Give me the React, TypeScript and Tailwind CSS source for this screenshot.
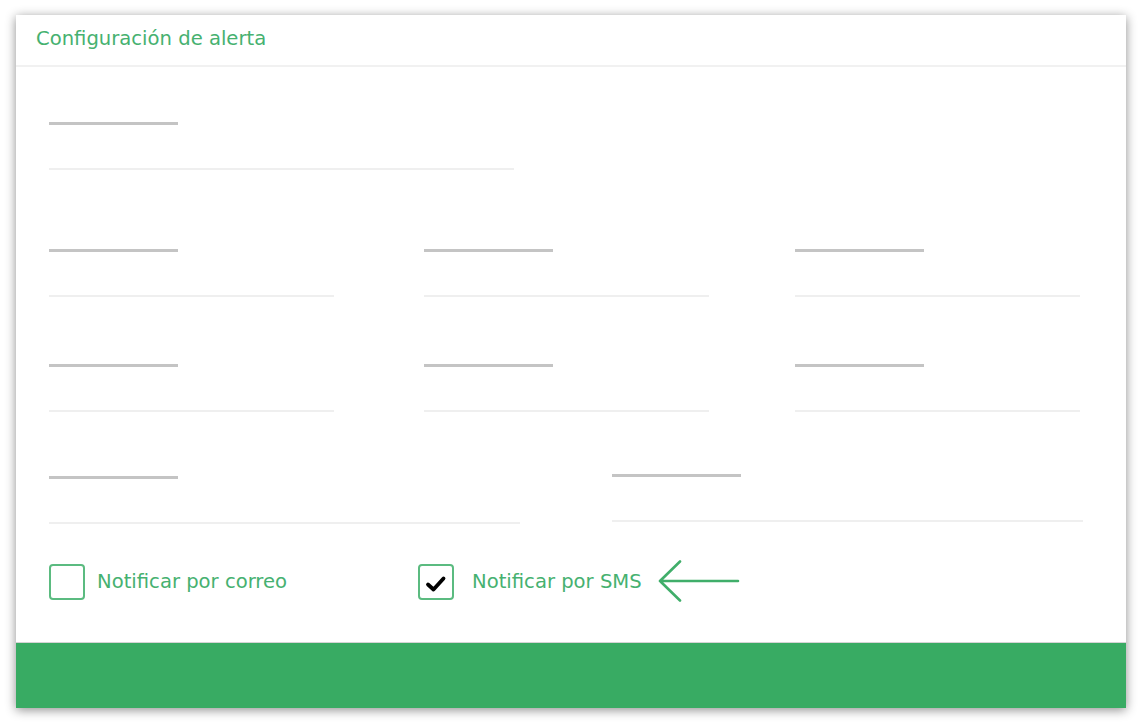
import React from "react";

function Field({ width, labelW = 129, className = "" }: { width: number | string; labelW?: number; className?: string }) {
  return (
    <div className={"flex flex-col " + className}>
      <div className="h-[3px] bg-[#c4c4c4]" style={{ width: labelW }} />
      <div className="mt-[43px] h-[2px] bg-[#efefef]" style={{ width }} />
    </div>
  );
}

export default function App() {
  return (
    <div className="w-[1143px] h-[725px] bg-white pt-[15px] pl-[16px]" style={{ fontFamily: '"DejaVu Sans", Verdana, sans-serif' }}>
      <div className="w-[1110px] h-[693px] bg-white flex flex-col shadow-[0_2px_10px_rgba(0,0,0,0.45)]">
        <div className="h-[52px] border-b-2 border-[#f1f1f1] pl-[20px] pt-[11px]">
          <span className="text-[19.6px] leading-[26px] text-[#46b170]">Configuración de alerta</span>
        </div>
        <div className="flex-1 flex flex-col pl-[33px] pt-[55px]">
          <Field width={465} />
          <div className="mt-[79px] flex">
            <Field width={285} className="w-[375px]" />
            <Field width={285} className="w-[371px]" />
            <Field width={285} />
          </div>
          <div className="mt-[67px] flex">
            <Field width={285} className="w-[375px]" />
            <Field width={285} className="w-[371px]" />
            <Field width={285} />
          </div>
          <div className="mt-[64px] flex items-start">
            <Field width={471} className="w-[563px]" />
            <Field width={471} className="-mt-[2px]" />
          </div>
          <div className="mt-[40px] flex items-center h-[36px]">
            <div className="w-[369px] flex items-center">
              <div className="w-[36px] h-[36px] rounded-[4px] border-2 border-[#5bbb80]" />
              <span className="ml-[12px] text-[19.6px] text-[#46b170]">Notificar por correo</span>
            </div>
            <div className="flex items-center">
              <div className="w-[36px] h-[36px] rounded-[4px] border-2 border-[#5bbb80] flex items-center justify-center">
                <svg width="24" height="24" viewBox="0 0 24 24" className="mt-[2px]">
                  <path d="M4 13.5 L9.5 18.5 L19.5 7.5" fill="none" stroke="#000" strokeWidth="3.8" strokeLinecap="round" strokeLinejoin="round" />
                </svg>
              </div>
              <span className="ml-[18px] text-[19.6px] text-[#46b170]">Notificar por SMS</span>
              <svg className="ml-[16px]" width="82" height="44" viewBox="0 0 82 44">
                <path d="M2 21 L80 21 M22 1.5 L2 21 L22 40.5" fill="none" stroke="#40ae6a" strokeWidth="2.6" strokeLinecap="round" strokeLinejoin="round" />
              </svg>
            </div>
          </div>
        </div>
        <div className="h-[66px] border-t border-[#d4d4d4] bg-[#38ab63]" />
      </div>
    </div>
  );
}
